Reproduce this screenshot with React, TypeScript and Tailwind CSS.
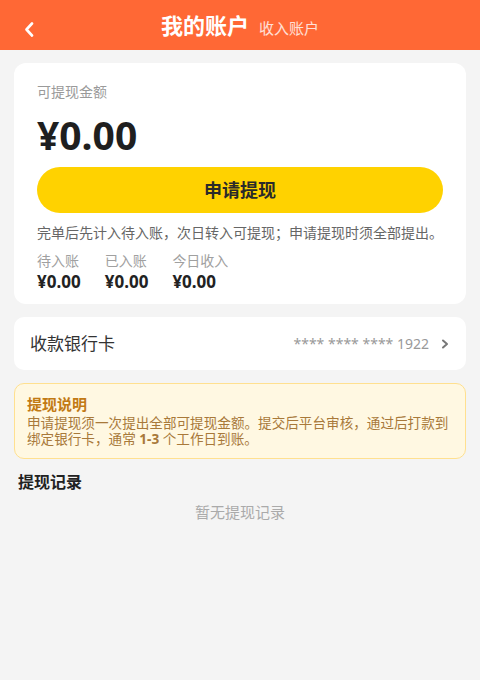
import React from 'react';

const font = "font-['Noto_Sans','Noto_Sans_CJK_SC',sans-serif]";

export default function App() {
  const stats = [
    { label: '待入账', value: '¥0.00' },
    { label: '已入账', value: '¥0.00' },
    { label: '今日收入', value: '¥0.00' },
  ];

  return (
    <div className={`min-h-[680px] w-[480px] bg-[#f4f4f4] ${font}`}>
      {/* header */}
      <header className="relative flex h-[50px] items-center justify-center bg-[#ff6835] text-white">
        <svg className="absolute left-[24px] top-[22px]" width="10" height="15" viewBox="0 0 10 15" fill="none">
          <path d="M8 1.5 L2.5 7.5 L8 13.5" stroke="white" strokeWidth="2.6" strokeLinecap="round" strokeLinejoin="round" />
        </svg>
        <div className="flex items-baseline gap-[10px]">
          <span className="text-[22px] font-bold">我的账户</span>
          <span className="text-[15px] text-white/80">收入账户</span>
        </div>
      </header>

      <div className="flex flex-col px-[14px] pt-[13px]">
        {/* balance card */}
        <div className="rounded-[12px] bg-white px-[23px] pt-[19px] pb-[10px]">
          <div className="text-[14px] leading-[20px] text-[#9a9a9a]">可提现金额</div>
          <div className="mt-[11px] text-[39px] font-bold leading-[44px] text-[#1f1f1f]">¥0.00</div>
          <button className="mt-[10px] flex h-[46px] w-full items-center justify-center rounded-full bg-[#ffd200] text-[18px] font-bold text-[#2a2a2a]">
            申请提现
          </button>
          <div className="mt-[10px] text-[14px] leading-[20px] text-[#666]">
            完单后先计入待入账，次日转入可提现；申请提现时须全部提出。
          </div>
          <div className="mt-[9px] flex gap-[24px]">
            {stats.map((s) => (
              <div key={s.label} className="flex flex-col">
                <span className="text-[14px] leading-[18px] text-[#a0a0a0]">{s.label}</span>
                <span className="text-[17px] font-bold leading-[24px] text-[#222]">{s.value}</span>
              </div>
            ))}
          </div>
        </div>

        {/* bank card row */}
        <div className="mt-[13px] flex h-[53px] items-center justify-between rounded-[10px] bg-white pl-[16px] pr-[17px]">
          <span className="text-[17px] text-[#333]">收款银行卡</span>
          <div className="flex items-center gap-[12px]">
            <span className="text-[14px] text-[#999]">**** **** **** 1922</span>
            <svg width="8" height="10" viewBox="0 0 8 10" fill="none">
              <path d="M2 1.5 L6 5 L2 8.5" stroke="#777" strokeWidth="2" strokeLinecap="round" strokeLinejoin="round" />
            </svg>
          </div>
        </div>

        {/* notice */}
        <div className="mt-[13px] rounded-[10px] border border-[#ffe08f] bg-[#fff8e2] pl-[12px] pr-[8px] pt-[10px] pb-[11px]">
          <div className="text-[15px] font-bold leading-[20px] text-[#c27a14]">提现说明</div>
          <div className="mt-[1px] text-[13.6px] leading-[16px] text-[#a8793a]">
            申请提现须一次提出全部可提现金额。提交后平台审核，通过后打款到绑定银行卡，通常 <b>1-3</b> 个工作日到账。
          </div>
        </div>

        {/* records */}
        <div className="mt-[12px] pl-[4px] text-[16px] font-bold leading-[22px] text-[#222]">提现记录</div>
        <div className="mt-[9px] text-center text-[15px] leading-[20px] text-[#aaa]">暂无提现记录</div>
      </div>
    </div>
  );
}
